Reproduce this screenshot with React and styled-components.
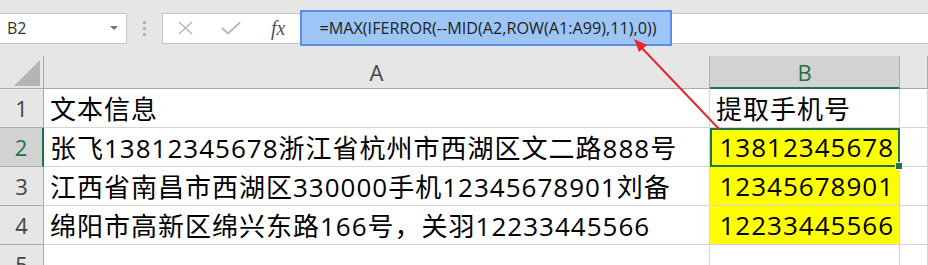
import React from 'react';
import styled, { createGlobalStyle } from 'styled-components';

const GlobalStyle = createGlobalStyle`
  html, body {
    margin:0;
    padding:0;
    background:#fff;
    overflow:hidden;
  }
  body {
    width:928px;
    height:265px;
    font-family:"Open Sans", "Noto Sans CJK SC", sans-serif;
  }
`;

const rows = [
  { n: 1, a: '文本信息', b: '提取手机号' },
  { n: 2, a: '张飞13812345678浙江省杭州市西湖区文二路888号', b: '13812345678', hl: true, active: true },
  { n: 3, a: '江西省南昌市西湖区330000手机12345678901刘备', b: '12345678901', hl: true },
  { n: 4, a: '绵阳市高新区绵兴东路166号，关羽12233445566', b: '12233445566', hl: true },
  { n: 5, a: '', b: '' },
];

export default function App() {
  return (
    <>
      <GlobalStyle />
      <Window>
        <FormulaBar>
          <NameBox>
            <span>B2</span>
            <Caret />
          </NameBox>
          <Grip><i /><i /><i /></Grip>
          <FormulaField>
            <ToolIcon>
              <svg width="18" height="14" viewBox="0 0 18 14">
                <path d="M2 1 L15 13 M15 1 L2 13" stroke="#b9b9b9" strokeWidth="1.6" fill="none" />
              </svg>
            </ToolIcon>
            <ToolIcon>
              <svg width="20" height="14" viewBox="0 0 20 14">
                <path d="M1 7 L7 12.5 L19 1.5" stroke="#b9b9b9" strokeWidth="2" fill="none" />
              </svg>
            </ToolIcon>
            <Fx>fx</Fx>
            <FormulaText>=MAX(IFERROR(--MID(A2,ROW(A1:A99),11),0))</FormulaText>
          </FormulaField>
        </FormulaBar>
        <Sheet>
          <Corner><Triangle /></Corner>
          <ColHead>A</ColHead>
          <ColHead selected>B</ColHead>
          <ColHead />
          {rows.map(r => (
            <React.Fragment key={r.n}>
              <RowHead selected={r.active}>{r.n}</RowHead>
              <Cell>{r.a}</Cell>
              <Cell fill={r.hl ? '#ffff00' : undefined} numeric={r.hl} active={r.active}>
                {r.b}
                {r.active && <Handle />}
              </Cell>
              <Cell />
            </React.Fragment>
          ))}
        </Sheet>
        <Arrow width="928" height="265" viewBox="0 0 928 265">
          <line x1="719" y1="129" x2="640" y2="46" stroke="#e8262b" strokeWidth="2" />
          <polygon points="634,39 647,45 639,52" fill="#e8262b" />
        </Arrow>
      </Window>
    </>
  );
}

const Window = styled.div`
  position:relative;
  width:928px;
  height:265px;
  overflow:hidden;
  background:#fff;
`;

const FormulaBar = styled.div`
  display:flex;
  align-items:center;
  height:56px;
  background:#e6e6e6;
`;

const NameBox = styled.div`
  display:flex;
  align-items:center;
  justify-content:space-between;
  box-sizing:border-box;
  width:127px;
  height:31px;
  padding:0 8px 0 7px;
  background:#fff;
  border:1px solid #c6c6c6;
  border-left:none;
  font-size:16px;
  color:#333;
`;

const Caret = styled.span`
  width:0;
  height:0;
  border-left:4px solid transparent;
  border-right:4px solid transparent;
  border-top:4px solid #777;
`;

const Grip = styled.div`
  display:flex;
  flex-direction:column;
  gap:3px;
  margin:0 16px 0 16px;

  i {
    display:block;
    width:3px;
    height:3px;
    background:#b3b3b3;
  }
`;

const FormulaField = styled.div`
  flex:1;
  display:flex;
  align-items:center;
  box-sizing:border-box;
  height:31px;
  padding-left:14px;
  background:#fff;
  border:1px solid #c6c6c6;
  border-right:none;
`;

const ToolIcon = styled.span`
  display:flex;
  align-items:center;
  margin-right:26px;
`;

const Fx = styled.span`
  font-family:"Liberation Serif", serif;
  font-style:italic;
  font-size:20px;
  color:#555;
  margin:0 15px 0 4px;
`;

const FormulaText = styled.span`
  box-sizing:border-box;
  width:372px;
  height:36px;
  display:flex;
  align-items:center;
  padding-left:17px;
  background:#9dc6f6;
  border:2px solid #5a8de6;
  font-size:16.2px;
  color:#222;
  white-space:nowrap;
`;

const Sheet = styled.div`
  display:grid;
  grid-template-columns:44px 666px 190px 1fr;
  grid-template-rows:33px repeat(5, 39px);
`;

const Corner = styled.div`
  position:relative;
  background:#e6e6e6;
  border-right:1px solid #ababab;
  border-bottom:1px solid #ababab;
`;

const Triangle = styled.div`
  position:absolute;
  right:3px;
  bottom:2px;
  width:0;
  height:0;
  border-left:26px solid transparent;
  border-bottom:26px solid #b4b4b4;
`;

const ColHead = styled.div`
  display:flex;
  align-items:center;
  justify-content:center;
  background:${p => p.selected ? '#d2d2d2' : '#e6e6e6'};
  border-right:1px solid #ababab;
  border-bottom:${p => p.selected ? '2px solid #217346' : '1px solid #ababab'};
  font-size:22px;
  color:${p => p.selected ? '#217346' : '#444'};
`;

const RowHead = styled.div`
  display:flex;
  align-items:center;
  justify-content:center;
  box-sizing:border-box;
  background:${p => p.selected ? '#d2d2d2' : '#e6e6e6'};
  border-right:${p => p.selected ? '2px solid #217346' : '1px solid #ababab'};
  border-bottom:1px solid #ababab;
  font-size:22px;
  color:${p => p.selected ? '#217346' : '#444'};
`;

const Cell = styled.div`
  position:relative;
  display:flex;
  align-items:center;
  justify-content:${p => p.numeric ? 'flex-end' : 'flex-start'};
  box-sizing:border-box;
  padding:${p => p.numeric ? '0 5px 0 0' : '0 0 0 6px'};
  background:${p => p.fill || '#fff'};
  border-right:1px solid #d4d4d4;
  border-bottom:1px solid #d4d4d4;
  ${p => p.active && 'outline:2px solid #217346; outline-offset:-2px;'}
  font-family:"Open Sans", "Noto Sans CJK SC", sans-serif;
  font-size:26px;
  letter-spacing:1px;
  color:#000;
  white-space:nowrap;
`;

const Handle = styled.span`
  position:absolute;
  right:-4px;
  bottom:-4px;
  width:6px;
  height:6px;
  background:#217346;
  border:1px solid #fff;
  z-index:2;
`;

const Arrow = styled.svg`
  position:absolute;
  left:0;
  top:0;
  pointer-events:none;
`;
